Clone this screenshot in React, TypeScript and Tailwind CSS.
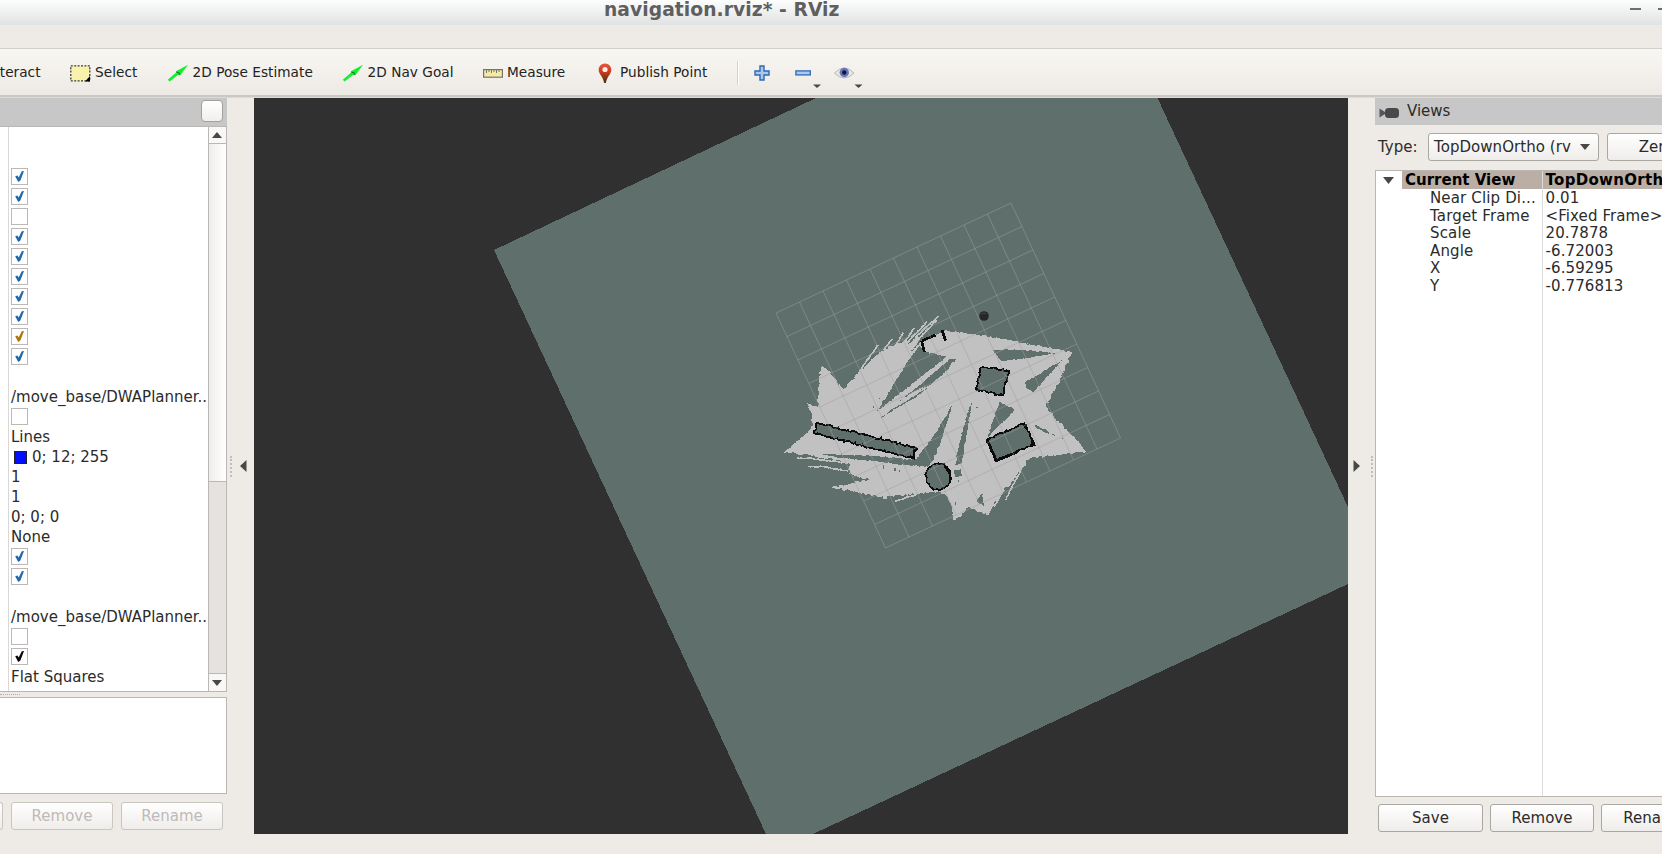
import React from "react";

type Pt = [number, number];

// Breaks straight edges into short segments so occupancy borders look like scanned cells.
function ragged(points: Pt[], amp: number, close = true): string {
  let seed = 17;
  const rnd = () => {
    seed = (seed * 16807) % 2147483647;
    return seed / 2147483647 - 0.5;
  };
  const out: string[] = [];
  const n = close ? points.length : points.length - 1;
  for (let i = 0; i < n; i++) {
    const [x1, y1] = points[i];
    const [x2, y2] = points[(i + 1) % points.length];
    const steps = Math.max(1, Math.round(Math.hypot(x2 - x1, y2 - y1) / 5));
    for (let s = 0; s < steps; s++) {
      const t = s / steps;
      const j = s === 0 ? 0 : amp;
      out.push(`${(x1 + (x2 - x1) * t + rnd() * j).toFixed(1)},${(y1 + (y2 - y1) * t + rnd() * j).toFixed(1)}`);
    }
  }
  if (!close) out.push(points[points.length - 1].join(","));
  return out.join(" ");
}

const FREE: Pt[] = [
  [42, 455], [75, 430], [130, 378], [125, 345], [112, 310], [143, 320], [148, 240], [155, 198], [170, 206], [220, 268],
  [262, 222], [290, 195], [330, 155], [368, 138], [400, 124], [410, 120], [416, 134], [440, 112], [452, 108], [420, 160],
  [455, 124], [490, 105], [515, 98], [525, 91], [600, 101], [700, 118], [800, 137], [906, 155],
  [870, 240], [828, 320], [870, 370], [915, 415], [950, 455], [930, 457], [850, 466], [770, 478], [768, 494], [745, 520],
  [715, 560], [690, 582], [675, 605], [655, 645], [640, 642], [595, 622], [565, 655], [550, 660], [545, 620], [525, 583], [500, 575],
  [440, 582], [345, 590], [290, 585], [260, 575], [185, 563], [240, 552], [297, 538], [250, 526], [230, 514], [240, 494],
  [200, 480], [150, 472], [100, 463], [60, 460],
];

const UNKNOWN: Pt[][] = [
  [[448, 136], [400, 205], [362, 270], [320, 335], [400, 273], [530, 170], [465, 156]],
  [[385, 307], [470, 238], [538, 178], [558, 176], [525, 218], [485, 252], [440, 275], [400, 298]],
  [[330, 355], [375, 322], [440, 285], [485, 254], [440, 290]],
  [[150, 461], [330, 469], [405, 478], [440, 478], [500, 395], [547, 315], [530, 370], [500, 460], [475, 500], [400, 494], [340, 486], [200, 472]],
  [[606, 305], [598, 355], [575, 495], [556, 495], [566, 440], [590, 350]],
  [[553, 510], [574, 508], [574, 530], [555, 530]],
  [[668, 150], [750, 149], [855, 160], [750, 178], [695, 184]],
  [[880, 178], [765, 248], [770, 265], [790, 276]],
  [[690, 305], [735, 330], [700, 365], [655, 410], [665, 370]],
  [[795, 373], [860, 408], [820, 395], [797, 382]],
  [[636, 578], [641, 618], [620, 602]],
  [[556, 604], [559, 616], [556, 614]],
  [[772, 486], [860, 470], [850, 474], [782, 490]],
];

const RAYS: Pt[][] = [
  [[264, 220], [324, 135]],
  [[340, 150], [366, 117]],
  [[378, 135], [400, 98]],
  [[402, 128], [434, 83]],
  [[400, 140], [471, 65]],
  [[436, 112], [505, 48]],
  [[385, 202], [440, 125], [500, 60]],
  [[80, 474], [130, 476], [235, 490]],
  [[115, 499], [170, 501], [240, 515]],
  [[672, 620], [702, 570]],
  [[706, 600], [758, 500]],
  [[340, 594], [352, 594]],
  [[375, 603], [440, 584]],
  [[395, 300], [460, 262]],
];

const WALLS: Pt[][] = [
  [[142, 368], [440, 445], [428, 475], [133, 400], [142, 368]],
  [[635, 200], [718, 212], [698, 287], [618, 268], [635, 200]],
  [[650, 418], [763, 370], [792, 432], [678, 484], [650, 418]],
  Array.from({ length: 25 }, (_, i): Pt => [505 + 37 * Math.cos((i * Math.PI) / 12), 530 + 40 * Math.sin((i * Math.PI) / 12)]),
];

const gridLines = Array.from({ length: 11 }, (_, i) => i / 10);
const A: Pt = [776, 313];
const B: Pt = [1011, 203];
const C: Pt = [1120.5, 438];
const D: Pt = [885.5, 548];
const mix = (p: Pt, q: Pt, t: number): Pt => [p[0] + (q[0] - p[0]) * t, p[1] + (q[1] - p[1]) * t];

function MapView() {
  return (
    <svg className="block h-[736px] w-[1094px] shrink-0 bg-[#303030]" viewBox="254 98 1094 736">
      <polygon points="494,250 816,98 1157.5,98 1348,507 1348,584 813,834 766,834" fill="#5f6f6c" shapeRendering="crispEdges" />
      <g transform="translate(770 300) scale(0.33333)" shapeRendering="crispEdges">
        <polygon points={ragged(FREE, 7)} fill="#c1c1c1" />
        {UNKNOWN.map((p, i) => (
          <polygon key={i} points={ragged(p, 4)} fill="#5f6f6c" />
        ))}
        {RAYS.map((p, i) => (
          <polyline key={i} points={ragged(p, 3, false)} fill="none" stroke="#c1c1c1" strokeWidth="5" />
        ))}
        {WALLS.map((p, i) => (
          <polyline key={i} points={ragged(p, 6, false)} fill="#5f6f6c" stroke="#0b0b0b" strokeWidth="5" />
        ))}
        <path
          d="M455 123L463 156M457 122L497 105M516 90L527 122M652 420L679 482L740 457M765 372L770 386M786 420L792 434L780 438M432 446V474L420 470M526 500L540 520V542M618 268L630 272M708 212L718 214M690 283L700 286"
          stroke="#0b0b0b"
          strokeWidth="8"
          fill="none"
        />
        <path
          d="M310 318v6M328 294v4M621 320v4M877 415v3M340 496v10M375 505v8M388 510v5M566 540v5M237 510v10"
          stroke="#5f6f6c"
          strokeWidth="4"
        />
      </g>
      <g stroke="#a0a0a4" strokeOpacity="0.5" strokeWidth="1">
        {gridLines.map((t) => {
          const [a, b, c, d] = [mix(A, B, t), mix(D, C, t), mix(A, D, t), mix(B, C, t)];
          return (
            <g key={t}>
              <line x1={a[0]} y1={a[1]} x2={b[0]} y2={b[1]} />
              <line x1={c[0]} y1={c[1]} x2={d[0]} y2={d[1]} />
            </g>
          );
        })}
      </g>
      <circle cx="984" cy="316" r="4.8" fill="#252826" />
      <path d="M981 314q3-2 5 0" stroke="#484a48" fill="none" />
    </svg>
  );
}

function Check({ color }: { color?: string }) {
  return (
    <span className="-mt-px flex h-[17px] w-[17px] items-center justify-center border border-[#bdb8b5] bg-white">
      {color && (
        <svg width="13" height="13" viewBox="0 0 13 13">
          <path d="M2.200 6.300L4.500 5.400L5.700 7.600L8.800 1.300L11 1.100L7.400 10.600L5.200 12Z" fill={color} />
        </svg>
      )}
    </span>
  );
}

const BLUE = "#2268ad";
const rows: React.ReactNode[] = [
  null,
  null,
  <Check color={BLUE} />,
  <Check color={BLUE} />,
  <Check />,
  <Check color={BLUE} />,
  <Check color={BLUE} />,
  <Check color={BLUE} />,
  <Check color={BLUE} />,
  <Check color={BLUE} />,
  <Check color="#ad7509" />,
  <Check color={BLUE} />,
  null,
  "/move_base/DWAPlanner..",
  <Check />,
  "Lines",
  <>
    <span className="ml-[3px] mr-[5px] h-[13px] w-[13px] border border-[#222] bg-[#0010ff]" />
    0; 12; 255
  </>,
  "1",
  "1",
  "0; 0; 0",
  "None",
  <Check color={BLUE} />,
  <Check color={BLUE} />,
  null,
  "/move_base/DWAPlanner..",
  <Check />,
  <Check color="#080808" />,
  "Flat Squares",
];

function Triangle({ d, w, h }: { d: string; w: number; h: number }) {
  return (
    <svg width={w} height={h} viewBox={`0 0 ${w} ${h}`}>
      <path d={d} fill="#484848" />
    </svg>
  );
}

const button =
  "flex h-[28px] shrink-0 items-center justify-center rounded-[3px] border bg-linear-to-b from-white to-[#efedea] text-[15px]";

function DisplaysPanel() {
  return (
    <div className="flex w-[227px] shrink-0 flex-col">
      <div className="flex h-[28px] justify-end bg-[#c7c7c7] pr-[4px] pt-[2px]">
        <span className="h-[22px] w-[22px] rounded-[4px] border border-[#a3a19f] bg-linear-to-b from-white to-[#f1efed]" />
      </div>
      <div className="flex h-[566px] w-[226.5px] border-y border-r border-[#b9b6b3] bg-white">
        <div className="w-[9px] shrink-0 border-r border-[#d8d8d8]" />
        <div className="flex w-[199px] shrink-0 flex-col overflow-hidden pl-[2px]">
          {rows.map((r, i) => (
            <div key={i} className="flex h-[20px] shrink-0 items-center whitespace-nowrap">
              {r}
            </div>
          ))}
        </div>
        <div className="flex min-w-0 flex-1 flex-col border-l border-[#bbb7b4] bg-[#e6e2df]">
          <div className="flex h-[17px] items-center justify-center border-b border-[#bbb7b4] bg-[#f9f8f7]">
            <Triangle w={10} h={6} d="M0 6L5 0L10 6Z" />
          </div>
          <div className="h-[338px] border-b border-[#bbb7b4] bg-linear-to-r from-[#f0eeec] to-white" />
          <div className="flex-1" />
          <div className="flex h-[18px] items-center justify-center border-t border-[#bbb7b4] bg-[#f9f8f7]">
            <Triangle w={10} h={6} d="M0 0H10L5 6Z" />
          </div>
        </div>
      </div>
      <div className="flex h-[5px] items-center">
        <div className="h-px w-[20px] border-t border-dotted border-[#b5b1ad]" />
      </div>
      <div className="h-[97px] w-[226.5px] border-y border-r border-[#b9b6b3] bg-white" />
      <div className="mt-[8px] flex gap-[8px] text-[#bdbab8]">
        <div className={`${button} w-[3px] rounded-l-none border-l-0 border-[#c9c5c1]`} />
        <div className={`${button} w-[102px] border-[#c9c5c1]`}>Remove</div>
        <div className={`${button} w-[102px] border-[#c9c5c1]`}>Rename</div>
      </div>
    </div>
  );
}

const properties = [
  ["Near Clip Di...", "0.01"],
  ["Target Frame", "<Fixed Frame>"],
  ["Scale", "20.7878"],
  ["Angle", "-6.72003"],
  ["X", "-6.59295"],
  ["Y", "-0.776813"],
];

function ViewsPanel() {
  return (
    <div className="flex w-[287px] shrink-0 flex-col overflow-hidden whitespace-nowrap">
      <div className="flex h-[27px] items-center bg-[#c7c7c7] pl-[4px]">
        <svg width="21" height="12" viewBox="0 0 21 12" className="mr-[7px] mt-[3px]">
          <path d="M0.5 1.5L6 5V7L0.5 10.5Z" fill="#555" />
          <rect x="6" y="1" width="14" height="10" rx="3.5" fill="#484848" />
        </svg>
        Views
      </div>
      <div className="flex pt-[8px]">
        <div className="flex h-[28px] w-[53px] shrink-0 items-center pl-[3px]">Type:</div>
        <div className={`${button} w-[171px] !justify-between border-[#aba7a3] pl-[5px] pr-[8px] text-[#2b2b2b]`}>
          <span className="tracking-[0.05px]">TopDownOrtho (rv</span>
          <Triangle w={10} h={6} d="M0 0H10L5 6Z" />
        </div>
        <div className={`${button} ml-[8px] w-[98px] border-[#aba7a3]`}>Zero</div>
      </div>
      <div className="mt-[9px] flex h-[627px] border-y border-l border-[#b9b6b3] bg-white">
        <div className="flex w-[167px] shrink-0 flex-col border-r border-[#dcdcdc]">
          <div className="flex h-[18px] items-center bg-[#baaea5] text-[15px] font-bold text-black">
            <div className="mr-[3px] flex h-full w-[26px] items-center justify-center bg-white pr-[2px]">
              <Triangle w={11} h={7} d="M0 0H11L5.5 7Z" />
            </div>
            Current View
          </div>
          <div className="flex flex-col pt-[1px]">
            {properties.map(([k]) => (
              <div key={k} className="flex h-[17.5px] items-center pl-[54px] tracking-[0.15px]">
                {k}
              </div>
            ))}
          </div>
        </div>
        <div className="flex w-[130px] shrink-0 flex-col">
          <div className="flex h-[18px] items-center bg-[#baaea5] pl-[2.5px] font-bold tracking-[0.3px] text-black">TopDownOrtho</div>
          <div className="flex flex-col pt-[1px]">
            {properties.map(([k, v]) => (
              <div key={k} className="flex h-[17.5px] items-center pl-[2.5px] tracking-[0.1px]">
                {v}
              </div>
            ))}
          </div>
        </div>
      </div>
      <div className="mt-[7px] flex gap-[7px] pl-[3px]">
        <div className={`${button} w-[105px] border-[#aba7a3]`}>Save</div>
        <div className={`${button} w-[104px] border-[#aba7a3]`}>Remove</div>
        <div className={`${button} w-[106px] border-[#aba7a3]`}>Rename</div>
      </div>
    </div>
  );
}

function Arrow() {
  return (
    <svg width="22" height="18" viewBox="0 0 22 18">
      <path d="M0.8 15.8L9.500 8.300L9 7.200L21 0.800L13.200 11.500L11.500 10.400L2.600 17.600Z" fill="#12f02c" />
      <path d="M9.200 8L12.500 9L12 11" stroke="#0a7a1a" fill="none" />
    </svg>
  );
}

function ToolBar() {
  return (
    <div className="flex h-[47px] items-center border-t border-[#d3d0cb] bg-linear-to-b from-[#f9f7f3] to-[#edeae5] pt-[2px] text-[13.65px] tracking-[0.04px] text-[#222]">
      <div className="flex w-[70px] shrink-0 items-center">
        <span className="-ml-[13px]">Interact</span>
      </div>
      <div className="flex w-[97px] items-center gap-[4px]">
        <svg width="21" height="17" viewBox="0 0 21 17">
          <rect x="0.8" y="0.8" width="19" height="15" fill="#f9f2ae" stroke="#3c3c35" strokeWidth="1.3" strokeDasharray="2 1.4" />
          <path d="M20 11V16.5H15Z" fill="#000" />
        </svg>
        <span>Select</span>
      </div>
      <div className="flex w-[175px] items-center gap-[3.5px]">
        <Arrow />
        2D Pose Estimate
      </div>
      <div className="flex w-[141px] items-center gap-[3.5px]">
        <Arrow />
        2D Nav Goal
      </div>
      <div className="flex w-[115px] items-center gap-[4px]">
        <svg width="20" height="9" viewBox="0 0 20 9">
          <rect x="0.6" y="0.6" width="18.8" height="7.6" fill="#f6eba6" stroke="#77746c" strokeWidth="1.2" />
          <path d="M3.5 1v3M6 1v2M8.5 1v3M11 1v2M13.500 1v3M16 1v2" stroke="#77746c" />
        </svg>
        Measure
      </div>
      <div className="flex w-[138px] items-center gap-[8px]">
        <svg width="14" height="21" viewBox="0 0 14 21">
          <defs>
            <linearGradient id="pin" x1="0" y1="0" x2="0" y2="1">
              <stop offset="0" stopColor="#e8583a" />
              <stop offset="0.45" stopColor="#c93a1e" />
              <stop offset="1" stopColor="#39330f" />
            </linearGradient>
          </defs>
          <path d="M7 0.500C3 0.500 0.700 3.500 0.700 7C0.700 11 5 13.500 6.200 20H7.800C9 13.500 13.300 11 13.300 7C13.300 3.500 11 0.500 7 0.500Z" fill="url(#pin)" />
          <circle cx="7" cy="6.500" r="2.600" fill="#fbe9e4" />
        </svg>
        Publish Point
      </div>
      <div className="ml-px h-[24px] w-[2px] border-l border-r border-l-[#d6d2cd] border-r-white" />
      <svg width="16" height="16" viewBox="0 0 16 16" className="ml-[15px]">
        <path d="M6 1H10V6H15V10H10V15H6V10H1V6H6Z" fill="#a9caee" stroke="#2f68b2" strokeWidth="1.400" />
      </svg>
      <svg width="28" height="30" viewBox="0 0 28 30" className="ml-[25px]">
        <rect x="0.900" y="12.900" width="14.400" height="4" fill="#a9caee" stroke="#3a70b8" strokeWidth="1.400" />
        <path d="M18 26.500H26L22 30Z" fill="#484848" />
      </svg>
      <svg width="32" height="30" viewBox="0 0 32 30" className="ml-[11px]">
        <path d="M0.500 15Q10 5 20 15Q10 25 0.500 15Z" fill="#e8e7e4" stroke="#b9b7b4" />
        <circle cx="10.300" cy="14.500" r="4.700" fill="#6678ba" />
        <circle cx="10.300" cy="14.500" r="2.200" fill="#101638" />
        <path d="M20.500 26.500H28.500L24.500 30Z" fill="#484848" />
      </svg>
    </div>
  );
}

export default function App() {
  return (
    <div className="flex h-[854px] w-[1662px] flex-col overflow-hidden whitespace-nowrap bg-[#eeebe6] font-['DejaVu_Sans',sans-serif] text-[15px] leading-none text-[#2b2b2b]">
      <div className="flex h-[25px] shrink-0 bg-linear-to-b from-[#fdfdfd] to-[#e0e3e3]">
        <div className="ml-[604px] h-[25px] text-[18.7px] font-bold leading-[20px] tracking-[0.06px] text-[#5f5f5f]">navigation.rviz* - RViz</div>
        <div className="ml-auto mt-[8px] flex gap-[17px]">
          <div className="h-[2px] w-[11px] bg-[#6d6d6d]" />
          <div className="h-[2px] w-[4px] bg-[#6d6d6d]" />
        </div>
      </div>
      <div className="h-[23px] shrink-0" />
      <ToolBar />
      <div className="h-[3px] shrink-0 border-t-2 border-[#cbc7c2] bg-[#dedbd6]" />
      <div className="flex h-[756px]">
        <DisplaysPanel />
        <div className="flex h-[736px] w-[27px] shrink-0 items-center pl-[3px]">
          <div className="h-[21px] w-px border-l-2 border-dotted border-[#c2beb9]" />
          <div className="ml-[8px]">
            <Triangle w={7} h={12} d="M0 6L6.5 0V12Z" />
          </div>
        </div>
        <MapView />
        <div className="flex h-[736px] w-[27px] shrink-0 items-center pl-[5px]">
          <Triangle w={7} h={12} d="M0.500 0L7 6L0.500 12Z" />
          <div className="ml-[11px] h-[21px] w-px border-l-2 border-dotted border-[#c2beb9]" />
        </div>
        <ViewsPanel />
      </div>
    </div>
  );
}
